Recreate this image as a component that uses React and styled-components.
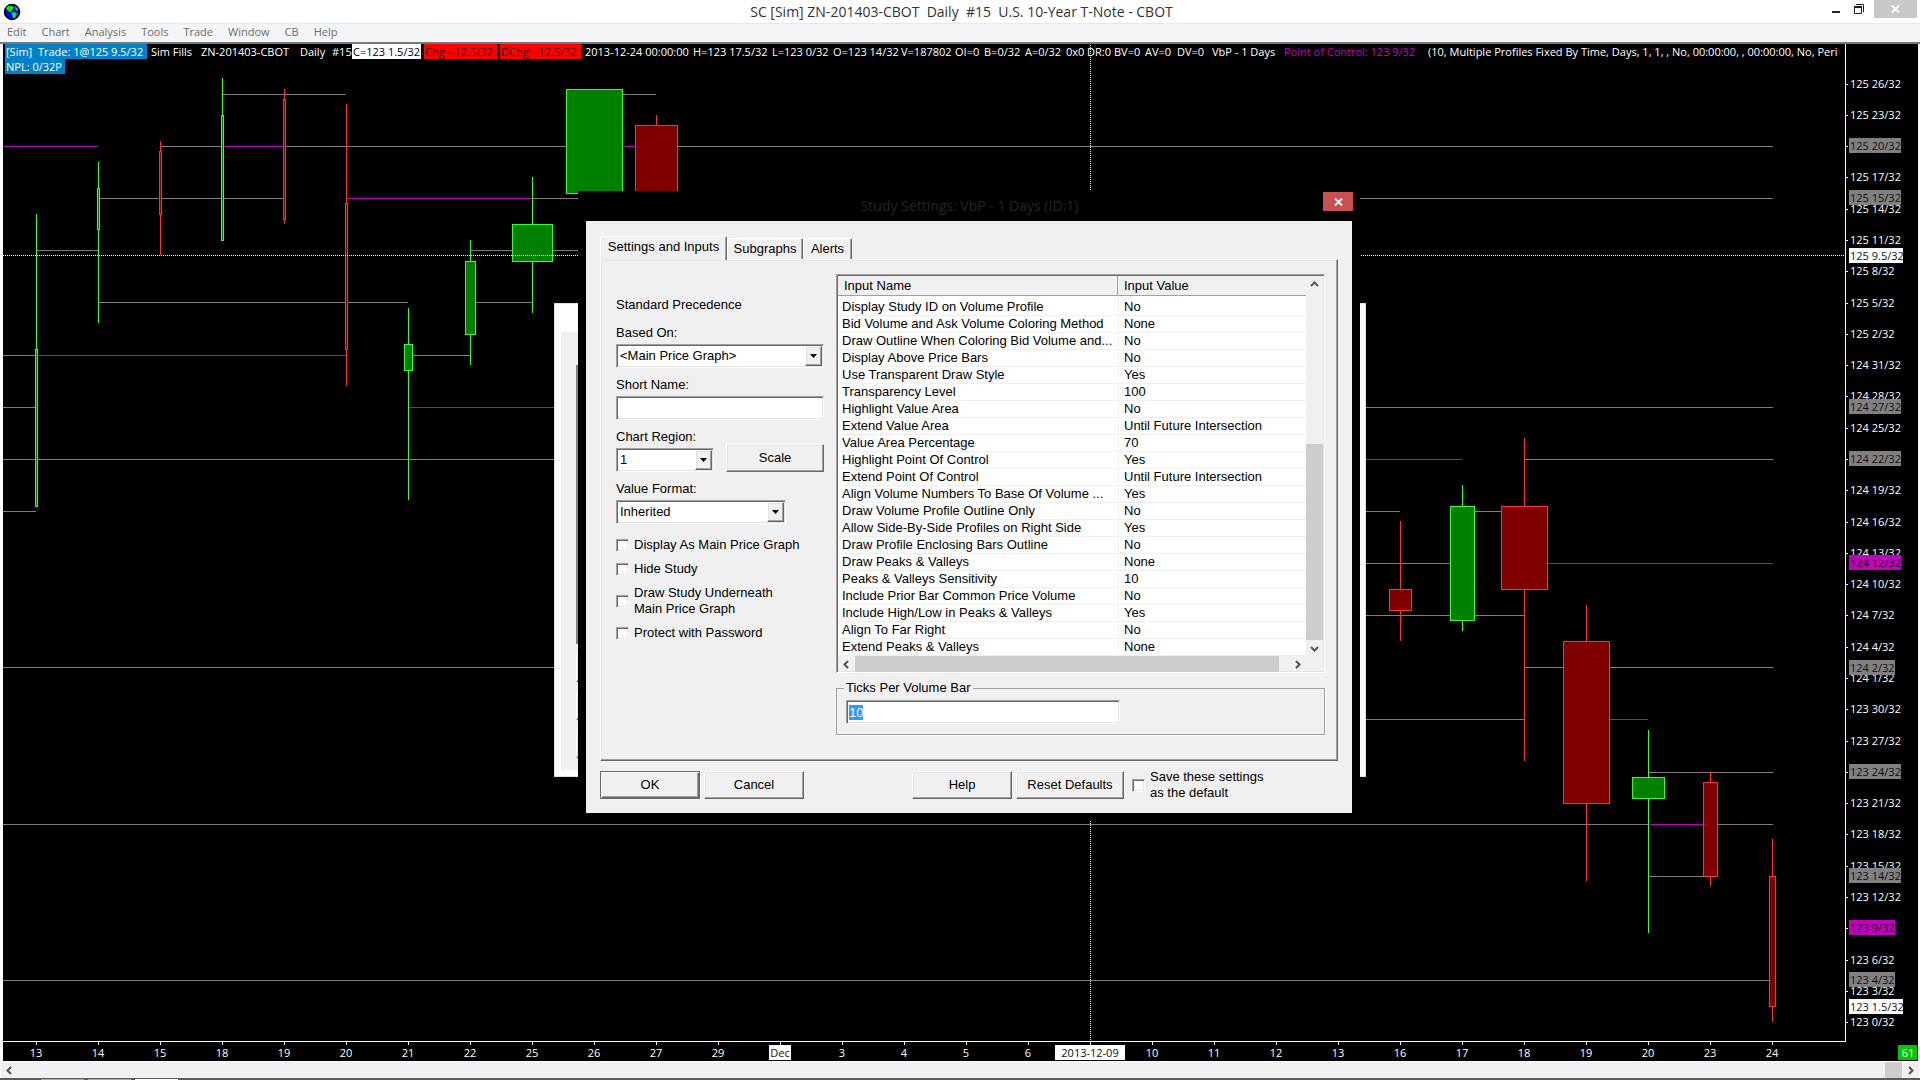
import React, { useEffect, useRef } from 'react'
import styled, { createGlobalStyle, css } from 'styled-components'

const GREEN = '#33ff33'
const RED = '#ff3333'
const GRAY = '#808080'
const MAGENTA = '#c000c0'

const CHART_FONT = "'Open Sans', 'Noto Sans', sans-serif"
const DIALOG_FONT = "'Liberation Sans', Arial, sans-serif"

// Chart geometry
const ORIGIN_X = 3
const ORIGIN_Y = 44
const AXIS_X = 1842
const AXIS_Y = 997
const BAR_SPACING = 62
const FIRST_BAR = 33

const DATES = [
  '13', '14', '15', '18', '19', '20', '21', '22', '25', '26', '27', '29',
  'Dec', '3', '4', '5', '6', '2013-12-09', '10', '11', '12', '13', '16', '17',
  '18', '19', '20', '23', '24',
]

const barX = index => FIRST_BAR + index * BAR_SPACING

// [bar index, high, body top, body bottom, low, body width, up]
const CANDLES = [
  [0, 214, 349, 507, 507, 3, true],
  [1, 162, 188, 230, 323, 3, true],
  [2, 141, 151, 215, 255, 3, false],
  [3, 78, 115, 241, 241, 3, true],
  [4, 89, 99, 220, 224, 3, false],
  [5, 104, 203, 350, 386, 3, false],
  [6, 308, 344, 371, 500, 9, true],
  [7, 240, 261, 335, 365, 11, true],
  [8, 177, 224, 262, 313, 41, true],
  [9, 89, 89, 194, 194, 57, true],
  [10, 115, 125, 220, 220, 43, false],
  [22, 521, 589, 611, 641, 23, false],
  [23, 485, 506, 621, 631, 25, true],
  [24, 438, 506, 590, 761, 47, false],
  [25, 605, 641, 804, 881, 47, false],
  [26, 730, 777, 799, 933, 33, true],
  [27, 772, 782, 877, 886, 15, false],
  [28, 839, 876, 1007, 1022, 7, false],
]

// [y, from, to, point of control]
const LEVELS = [
  [94, 222, 346],
  [94, 623, 656],
  [146, 3, 98, true],
  [146, 160, 222],
  [146, 222, 284, true],
  [146, 284, 594],
  [146, 594, 656, true],
  [146, 656, 1773],
  [198, 98, 284],
  [198, 346, 532, true],
  [198, 532, 1773],
  [250, 36, 98],
  [250, 470, 594],
  [302, 98, 408],
  [302, 470, 532],
  [355, 3, 36],
  [355, 36, 346, true],
  [355, 408, 470],
  [407, 3, 36],
  [407, 408, 594, true],
  [407, 1152, 1773],
  [459, 3, 594],
  [459, 1152, 1462, true],
  [459, 1524, 1773],
  [511, 3, 36],
  [511, 1152, 1400],
  [511, 1462, 1524],
  [563, 1152, 1462],
  [563, 1524, 1773, true],
  [615, 1152, 1524],
  [667, 3, 594],
  [667, 1524, 1773],
  [719, 1152, 1524],
  [719, 1586, 1648, true],
  [772, 1648, 1773],
  [824, 3, 1648],
  [824, 1648, 1710, true],
  [824, 1710, 1773],
  [876, 1648, 1710],
  [980, 3, 1773],
]

// Prices are kept in 32nds
const TOP_PRICE = 125 * 32 + 26
const PRICES = Array.from({ length: 31 }, (_, i) => TOP_PRICE - i * 3)

const priceY = price => Math.floor(40 + (TOP_PRICE - price) * 10.43)
const formatPrice = price => `${Math.floor(price / 32)} ${price % 32}/32`

const TAGS = [
  [125 * 32 + 20, 'level'],
  [125 * 32 + 15, 'level'],
  [125 * 32 + 9.5, 'last'],
  [124 * 32 + 27, 'level'],
  [124 * 32 + 22, 'level'],
  [124 * 32 + 12, 'control'],
  [124 * 32 + 2, 'level'],
  [123 * 32 + 24, 'level'],
  [123 * 32 + 14, 'level'],
  [123 * 32 + 9, 'control'],
  [123 * 32 + 4, 'level'],
  [123 * 32 + 1.5, 'last'],
]

const TAG_FILL = { level: GRAY, control: MAGENTA, last: '#fff' }

// A tag at the same price replaces the plain label
const isTagged = price => TAGS.some(([tagPrice]) => tagPrice === price)

const MENU = ['Edit', 'Chart', 'Analysis', 'Tools', 'Trade', 'Window', 'CB', 'Help']

// [text, cell width, tone]
const STATUS = [
  ['[Sim]  Trade: 1@125 9.5/32', 142, 'trade'],
  ['Sim Fills', 47],
  ['ZN-201403-CBOT', 96],
  ['Daily', 29],
  ['#15', 18],
  ['C=123 1.5/32', 69, 'last'],
  ['Chg=-12.5/32', 73, 'down'],
  ['DChg=-12.5/32', 81, 'down'],
  ['2013-12-24 00:00:00', 105],
  ['H=123 17.5/32', 76],
  ['L=123 0/32', 58],
  ['O=123 14/32', 65],
  ['V=187802', 51],
  ['OI=0', 26],
  ['B=0/32', 38],
  ['A=0/32', 38],
  ['0x0', 18],
  ['DR:0', 24],
  ['BV=0', 28],
  ['AV=0', 29],
  ['DV=0', 32],
  ['VbP - 1 Days', 69],
  ['Point of Control: 123 9/32', 141, 'control'],
  ['(10, Multiple Profiles Fixed By Time, Days, 1, 1, , No, 00:00:00, , 00:00:00, No, Peri', 420],
]

const INPUTS = [
  ['Display Study ID on Volume Profile', 'No'],
  ['Bid Volume and Ask Volume Coloring Method', 'None'],
  ['Draw Outline When Coloring Bid Volume and...', 'No'],
  ['Display Above Price Bars', 'No'],
  ['Use Transparent Draw Style', 'Yes'],
  ['Transparency Level', '100'],
  ['Highlight Value Area', 'No'],
  ['Extend Value Area', 'Until Future Intersection'],
  ['Value Area Percentage', '70'],
  ['Highlight Point Of Control', 'Yes'],
  ['Extend Point Of Control', 'Until Future Intersection'],
  ['Align Volume Numbers To Base Of Volume ...', 'Yes'],
  ['Draw Volume Profile Outline Only', 'No'],
  ['Allow Side-By-Side Profiles on Right Side', 'Yes'],
  ['Draw Profile Enclosing Bars Outline', 'No'],
  ['Draw Peaks & Valleys', 'None'],
  ['Peaks & Valleys Sensitivity', '10'],
  ['Include Prior Bar Common Price Volume', 'No'],
  ['Include High/Low in Peaks & Valleys', 'Yes'],
  ['Align To Far Right', 'No'],
  ['Extend Peaks & Valleys', 'None'],
]

const App = () => (
  <Main>
    <GlobalStyle />
    <TitleBar>
      <Globe />
      <WindowTitle>
        {'SC [Sim] ZN-201403-CBOT  Daily  #15  U.S. 10-Year T-Note - CBOT'}
      </WindowTitle>
      <WindowControls />
    </TitleBar>
    <MenuBar>
      {MENU.map(item => (
        <MenuItem key={item} type="button">
          {item}
        </MenuItem>
      ))}
    </MenuBar>
    <ChartArea>
      <Chart />
      <StatusLine>
        {STATUS.map(([text, width, tone]) => (
          <StatusCell key={text} $width={width} $tone={tone}>
            {text}
          </StatusCell>
        ))}
      </StatusLine>
      <ProfitLine>
        <StatusCell $width={60} $tone="trade">
          NPL: 0/32P
        </StatusCell>
      </ProfitLine>
    </ChartArea>
    <BottomBar>
      <ScrollArrow direction="left" label="Scroll left" />
      <BottomThumb />
      <ScrollArrow direction="right" label="Scroll right" />
    </BottomBar>
    <TaskStrip>
      <Task $color="#aaa5a8" />
      <Task $color="#aaa5a8" />
      <Task $color="#fff" />
    </TaskStrip>
    <BackWindow />
    <StudySettings />
  </Main>
)

const Globe = () => (
  <svg width="18" height="18" viewBox="0 0 18 18" aria-hidden="true">
    <circle cx="9" cy="9" r="7.5" fill="#0000f0" stroke="#000" strokeWidth="1.5" />
    <path
      d="M5 3H9L11 4L10 6L8 7L9 9L7 9L4 7L3 5ZM12 3L15 6V8L13 7L12 5ZM8 10L12 9L14 11L12 15H10L9 12Z"
      fill="#00f000"
    />
  </svg>
)

const WindowControls = () => (
  <Controls>
    <ControlButton type="button" aria-label="Minimize">
      <svg width="11" height="11" viewBox="0 0 11 11">
        <path d="M0 7H8V9H0Z" fill="#222" />
      </svg>
    </ControlButton>
    <ControlButton type="button" aria-label="Restore">
      <svg width="11" height="11" viewBox="0 0 11 11">
        <path d="M3 .5H10.5V8" fill="none" stroke="#222" />
        <path d="M1.5 3.5H8.5V9.5H1.5Z" fill="none" stroke="#222" />
        <path d="M1 2H9V4H1Z" fill="#222" />
      </svg>
    </ControlButton>
    <CloseMain type="button" aria-label="Close">
      <CrossIcon />
    </CloseMain>
  </Controls>
)

const CrossIcon = () => (
  <svg width="9" height="8" viewBox="0 0 9 8">
    <path d="M1 .5L8 7.5M8 .5L1 7.5" stroke="#fff" strokeWidth="1.8" />
  </svg>
)

const Chart = () => (
  <ChartSvg role="img" aria-label="ZN-201403-CBOT daily chart">
    {LEVELS.map(([y, from, to, control]) => (
      <rect
        key={`${y}-${from}`}
        x={from - ORIGIN_X}
        y={y - ORIGIN_Y}
        width={to - from}
        height="1"
        fill={control ? MAGENTA : GRAY}
      />
    ))}
    {CANDLES.map(candle => (
      <Candle key={candle[0]} candle={candle} />
    ))}
    <path
      d={`M0 211.5H${AXIS_X}M1087.5 1V${AXIS_Y}`}
      stroke="#fff"
      strokeDasharray="1 1"
    />
    <PriceAxis />
    <DateAxis />
  </ChartSvg>
)

const Candle = ({ candle: [index, high, top, bottom, low, width, up] }) => {
  const x = barX(index)
  const color = up ? GREEN : RED
  return (
    <g>
      <rect x={x} y={high - ORIGIN_Y} width="1" height={low - high} fill={color} />
      <rect
        x={x + 1 - width / 2}
        y={top - ORIGIN_Y + 0.5}
        width={width - 1}
        height={bottom - top - 1}
        fill={up ? '#008000' : '#800000'}
        stroke={color}
      />
    </g>
  )
}

const PriceAxis = () => (
  <g>
    <rect x={AXIS_X} y="0" width="1" height={AXIS_Y + 1} fill="#fff" />
    {PRICES.map(price => (
      <g key={price}>
        <rect x={AXIS_X} y={priceY(price)} width="3" height="1" fill="#fff" />
        {!isTagged(price) && (
          <AxisText x={AXIS_X + 5} y={priceY(price) + 4}>
            {formatPrice(price)}
          </AxisText>
        )}
      </g>
    ))}
    {TAGS.map(([price, kind]) => {
      const text = formatPrice(price)
      return (
        <g key={price}>
          <rect
            x={AXIS_X + 4}
            y={priceY(price) - 8}
            width={text.length * 6 - 2 - (text.length > 9 ? 4 : 0)}
            height="15"
            fill={TAG_FILL[kind]}
          />
          <AxisText x={AXIS_X + 5} y={priceY(price) + 4} $dark>
            {text}
          </AxisText>
        </g>
      )
    })}
  </g>
)

const DateAxis = () => (
  <g>
    <rect x="0" y={AXIS_Y} width={AXIS_X + 1} height="1" fill="#fff" />
    {DATES.map((date, i) => {
      const tagged = date.length > 2
      const tagWidth = date.length > 3 ? 70 : 22
      return (
        <g key={i}>
          <rect x={barX(i)} y={AXIS_Y + 1} width="1" height="3" fill="#fff" />
          {tagged && (
            <rect
              x={barX(i) - tagWidth / 2}
              y={AXIS_Y + 4}
              width={tagWidth}
              height="15"
              fill="#fff"
            />
          )}
          <AxisText x={barX(i)} y={AXIS_Y + 16} textAnchor="middle" $dark={tagged}>
            {date}
          </AxisText>
        </g>
      )
    })}
    <rect x="1895" y={AXIS_Y + 4} width="19" height="15" fill="#00c800" />
    <AxisText x="1905" y={AXIS_Y + 16} textAnchor="middle">
      61
    </AxisText>
  </g>
)

const ARROWS = {
  up: 'M1 6L4.5 2.5L8 6',
  down: 'M1 3L4.5 6.5L8 3',
  left: 'M6 1L2.5 4.5L6 8',
  right: 'M3 1L6.5 4.5L3 8',
}

const ScrollArrow = ({ direction, label }) => (
  <ArrowButton type="button" aria-label={label}>
    <svg width="9" height="9" viewBox="0 0 9 9">
      <path d={ARROWS[direction]} fill="none" stroke="#555" strokeWidth="2" />
    </svg>
  </ArrowButton>
)

const BackWindow = () => (
  <BackFrame aria-hidden="true">
    <BackPanel>
      <BackList />
      <BackButton />
      <BackButton />
      <BackButton />
    </BackPanel>
  </BackFrame>
)

const Dropdown = ({ id, label, value, width }) => (
  <Field>
    <label htmlFor={id}>{label}</label>
    <SelectBox $width={width}>
      <Select id={id} defaultValue={value}>
        <option>{value}</option>
      </Select>
      <SelectArrow>
        <svg width="7" height="4" viewBox="0 0 7 4">
          <path d="M0 0H7L3.5 4Z" fill="#000" />
        </svg>
      </SelectArrow>
    </SelectBox>
  </Field>
)

const StudySettings = () => {
  const ticks = useRef(null)

  useEffect(() => {
    ticks.current.focus({ preventScroll: true })
    ticks.current.select()
  }, [])

  return (
    <Dialog role="dialog" aria-labelledby="study-title">
      <DialogBar>
        <DialogTitle id="study-title">Study Settings: VbP - 1 Days (ID:1)</DialogTitle>
        <DialogClose type="button" aria-label="Close dialog">
          <CrossIcon />
        </DialogClose>
      </DialogBar>
      <DialogBody>
        <Tabs role="tablist">
          <Tab type="button" role="tab" aria-selected="true" $width={127} $active>
            Settings and Inputs
          </Tab>
          <Tab type="button" role="tab" aria-selected="false" $width={76}>
            Subgraphs
          </Tab>
          <Tab type="button" role="tab" aria-selected="false" $width={49}>
            Alerts
          </Tab>
        </Tabs>
        <TabPanel role="tabpanel">
          <Settings>
            <Precedence>Standard Precedence</Precedence>
            <Dropdown id="based-on" label="Based On:" value="<Main Price Graph>" width={208} />
            <Field>
              <label htmlFor="short-name">Short Name:</label>
              <TextInput id="short-name" type="text" $width={208} />
            </Field>
            <RegionRow>
              <Dropdown id="region" label="Chart Region:" value="1" width={98} />
              <PushButton type="button" $width={98}>
                Scale
              </PushButton>
            </RegionRow>
            <Dropdown id="format" label="Value Format:" value="Inherited" width={170} />
            <Checks>
              <Check>
                <CheckBox type="checkbox" />
                Display As Main Price Graph
              </Check>
              <Check>
                <CheckBox type="checkbox" />
                Hide Study
              </Check>
              <Check>
                <CheckBox type="checkbox" />
                <span>
                  Draw Study Underneath
                  <br />
                  Main Price Graph
                </span>
              </Check>
              <Check>
                <CheckBox type="checkbox" />
                Protect with Password
              </Check>
            </Checks>
          </Settings>
          <Inputs>
            <ListBox>
              <InputTable>
                <colgroup>
                  <NameCol />
                  <col />
                </colgroup>
                <thead>
                  <tr>
                    <th>Input Name</th>
                    <th>Input Value</th>
                  </tr>
                </thead>
                <tbody>
                  {INPUTS.map(([name, value]) => (
                    <tr key={name}>
                      <td>{name}</td>
                      <td>{value}</td>
                    </tr>
                  ))}
                </tbody>
              </InputTable>
              <VerticalBar>
                <ScrollArrow direction="up" label="Scroll list up" />
                <VerticalThumb />
                <ScrollArrow direction="down" label="Scroll list down" />
              </VerticalBar>
              <HorizontalBar>
                <ScrollArrow direction="left" label="Scroll list left" />
                <HorizontalThumb />
                <ScrollArrow direction="right" label="Scroll list right" />
              </HorizontalBar>
            </ListBox>
            <Group>
              <legend>Ticks Per Volume Bar</legend>
              <TextInput
                ref={ticks}
                type="text"
                aria-label="Ticks Per Volume Bar"
                defaultValue="10"
                $width={274}
              />
            </Group>
          </Inputs>
        </TabPanel>
        <Footer>
          <PushButton type="button" $width={100} $default>
            OK
          </PushButton>
          <PushButton type="button" $width={100}>
            Cancel
          </PushButton>
          <Spacer />
          <PushButton type="button" $width={100}>
            Help
          </PushButton>
          <PushButton type="button" $width={108}>
            Reset Defaults
          </PushButton>
          <SaveCheck>
            <CheckBox type="checkbox" />
            <span>
              Save these settings
              <br />
              as the default
            </span>
          </SaveCheck>
        </Footer>
      </DialogBody>
    </Dialog>
  )
}

const GlobalStyle = createGlobalStyle`
  *, *::before, *::after {
    box-sizing: border-box;
  }
  body {
    margin: 0;
    background: #fff;
    overflow: hidden;
  }
  button, input, select {
    font: inherit;
    color: inherit;
    margin: 0;
    padding: 0;
    border-radius: 0;
    outline: none;
  }
`

const sunken = css`
  border: 1px solid;
  border-color: #a0a0a0 #fff #fff #a0a0a0;
  box-shadow: inset 1px 1px #696969, inset -1px -1px #e3e3e3;
`

const raised = css`
  border: 1px solid;
  border-color: #fff #696969 #696969 #fff;
  box-shadow: inset -1px -1px #a0a0a0, inset 1px 1px #e3e3e3;
`

const Main = styled.div`
  position: relative;
  display: flex;
  flex-direction: column;
  height: 100vh;
  font-family: ${CHART_FONT};
  font-size: 11px;
`

const TitleBar = styled.header`
  display: grid;
  grid-template-columns: 120px 1fr 120px;
  height: 23px;
  padding-left: 3px;
  padding-top: 3px;
`

const WindowTitle = styled.h1`
  margin: 0;
  font-size: 14px;
  font-weight: 400;
  line-height: 18px;
  text-align: center;
  white-space: pre;
  color: #333;
`

const Controls = styled.div`
  display: flex;
  justify-content: flex-end;
  align-items: flex-start;
  gap: 10px;
  height: 18px;
  margin-top: -3px;
  padding-right: 3px;
`

const ControlButton = styled.button`
  display: flex;
  border: 0;
  background: none;
  padding-top: 4px;
`

const CloseMain = styled.button`
  display: flex;
  align-items: center;
  justify-content: center;
  width: 43px;
  height: 18px;
  border: 0;
  background: #c8c8c8;
`

const MenuBar = styled.nav`
  display: flex;
  align-items: flex-start;
  gap: 15px;
  height: 21px;
  padding-left: 7px;
  background: #f4f5f7;
  border-top: 1px solid #e8e8e8;
  border-bottom: 2px solid #767a7c;
`

const MenuItem = styled.button`
  border: 0;
  background: none;
  color: #6d6d6d;
  line-height: 16px;
`

const ChartArea = styled.main`
  position: relative;
  flex: 1;
  min-height: 0;
  margin: 0 2px 0 3px;
  background: #000;
  overflow: hidden;
`

const ChartSvg = styled.svg`
  display: block;
  width: 100%;
  height: 100%;
  shape-rendering: crispEdges;
`

const AxisText = styled.text`
  font-family: ${CHART_FONT};
  font-size: 11px;
  fill: ${({ $dark }) => ($dark ? '#111' : '#fff')};
`

const StatusLine = styled.div`
  position: absolute;
  top: 0;
  left: 2px;
  right: 73px;
  display: flex;
  gap: 3px;
  overflow: hidden;
`

const ProfitLine = styled.div`
  position: absolute;
  top: 15px;
  left: 2px;
`

const TONES = {
  trade: 'background: #0080c8; color: #fff;',
  last: 'background: #fff; color: #000;',
  down: 'background: #f00; color: #400000;',
  control: `color: ${MAGENTA};`,
}

const StatusCell = styled.div`
  flex: none;
  width: ${({ $width }) => $width}px;
  height: 15px;
  padding-left: 1px;
  line-height: 15px;
  white-space: pre;
  color: #fff;
  ${({ $tone }) => TONES[$tone]}
`

const BottomBar = styled.div`
  display: flex;
  align-items: stretch;
  justify-content: space-between;
  height: 17px;
  margin: 0 1px;
  border-top: 1px solid #fff;
  background: #f0f0f0;
`

const BottomThumb = styled.div`
  width: 17px;
  margin-left: auto;
  background: #cdcdcd;
`

const ArrowButton = styled.button`
  display: flex;
  flex: none;
  align-items: center;
  justify-content: center;
  width: 17px;
  height: 16px;
  border: 0;
  background: none;
`

const TaskStrip = styled.div`
  display: flex;
  align-items: flex-end;
  gap: 4px;
  height: 2px;
  padding-left: 41px;
  background: #5f5a5d;
`

const Task = styled.div`
  width: 43px;
  height: 1px;
  background: ${({ $color }) => $color};
`

const BackFrame = styled.div`
  position: absolute;
  left: 554px;
  top: 303px;
  width: 812px;
  height: 474px;
  padding: 28px 6px 6px;
  background: #fff;
  border: 1px solid #e0e0e0;
`

const BackPanel = styled.div`
  height: 100%;
  padding: 33px 15px 0;
  background: #f0f0f0;
`

const BackList = styled.div`
  height: 279px;
  border-left: 2px solid #808080;
`

const BackButton = styled.div`
  ${raised}
  height: 28px;
  margin-top: 10px;
`

const Dialog = styled.section`
  position: absolute;
  left: 578px;
  top: 191px;
  width: 782px;
  padding: 0 8px 8px;
  background: #000;
  font-family: ${DIALOG_FONT};
  font-size: 13px;
  line-height: 16px;
  color: #000;
`

const DialogBar = styled.div`
  display: grid;
  grid-template-columns: 30px 1fr 30px;
  align-items: start;
  height: 30px;
  margin-right: -1px;
  padding-top: 1px;
`

const DialogTitle = styled.h2`
  grid-column: 2;
  margin: 0;
  font-family: ${CHART_FONT};
  font-size: 14px;
  font-weight: 400;
  line-height: 28px;
  text-align: center;
  color: #262626;
`

const DialogClose = styled.button`
  display: flex;
  align-items: center;
  justify-content: center;
  height: 19px;
  border: 0;
  background: #c75050;
`

const DialogBody = styled.div`
  padding: 14px 14px 12px;
  background: #f0f0f0;
`

const Tabs = styled.div`
  display: flex;
  align-items: flex-end;
  height: 24px;
`

const Tab = styled.button`
  width: ${({ $width }) => $width}px;
  height: ${({ $active }) => ($active ? 24 : 21)}px;
  margin-bottom: ${({ $active }) => ($active ? -1 : 0)}px;
  padding-bottom: ${({ $active }) => ($active ? 4 : 0)}px;
  position: relative;
  border: 1px solid;
  border-color: #fff #696969 transparent #fff;
  border-bottom: 0;
  border-radius: 2px 2px 0 0;
  box-shadow: inset -1px 0 #a0a0a0;
  background: #f0f0f0;
`

const TabPanel = styled.div`
  ${raised}
  display: flex;
  justify-content: space-between;
  height: 502px;
  padding: 14px 12px 0 15px;
`

const Settings = styled.div`
  display: flex;
  flex-direction: column;
  width: 208px;
`

const Precedence = styled.div`
  margin: 23px 0 12px;
`

const Field = styled.div`
  display: flex;
  flex-direction: column;
  gap: 3px;
  height: 52px;
`

const RegionRow = styled.div`
  display: flex;
  justify-content: space-between;
  align-items: flex-start;

  button {
    margin-top: 15px;
  }
`

const SelectBox = styled.div`
  ${sunken}
  display: grid;
  width: ${({ $width }) => $width}px;
  height: 24px;
  padding: 1px;
  background: #fff;
`

const Select = styled.select`
  grid-area: 1 / 1;
  width: 100%;
  appearance: none;
  border: 0;
  padding-left: 2px;
  background: none;
`

const SelectArrow = styled.span`
  ${raised}
  grid-area: 1 / 1;
  justify-self: end;
  display: flex;
  align-items: center;
  justify-content: center;
  width: 17px;
  background: #f0f0f0;
  pointer-events: none;
`

const TextInput = styled.input`
  ${sunken}
  width: ${({ $width }) => $width}px;
  height: 24px;
  padding: 0 2px;
  background: #fff;

  &::selection {
    background: #3399ff;
    color: #fff;
  }
`

const PushButton = styled.button`
  ${raised}
  flex: none;
  width: ${({ $width }) => $width}px;
  height: 28px;
  background: #f0f0f0;
  ${({ $default }) =>
    $default &&
    css`
      border-color: #696969;
      box-shadow: inset 1px 1px #fff, inset -1px -1px #696969,
        inset -2px -2px #a0a0a0;
    `}
`

const Checks = styled.div`
  display: flex;
  flex-direction: column;
  gap: 8px;
  margin-top: 4px;
`

const Check = styled.label`
  display: flex;
  align-items: center;
  gap: 5px;
`

const CheckBox = styled.input`
  ${sunken}
  flex: none;
  width: 13px;
  height: 13px;
  appearance: none;
  background: #fff;
`

const Inputs = styled.div`
  display: flex;
  flex-direction: column;
  gap: 7px;
  width: 489px;
`

const ListBox = styled.div`
  ${sunken}
  display: grid;
  grid-template-columns: 1fr 17px;
  grid-template-rows: 1fr 16px;
  height: 399px;
  padding: 1px;
  background: #f0f0f0;
`

const InputTable = styled.table`
  table-layout: fixed;
  width: 100%;
  border-collapse: separate;
  border-spacing: 0;
  background: #fff;

  th {
    height: 20px;
    padding: 0 6px;
    font-weight: 400;
    text-align: left;
    background: #f0f0f0;
    border-right: 1px solid #a0a0a0;
    border-bottom: 1px solid #a0a0a0;
  }

  th:last-child {
    border-right: 0;
  }

  td {
    height: 17px;
    padding: 0 0 0 4px;
    line-height: 16px;
    white-space: nowrap;
    border-bottom: 1px solid #f0f0f0;
  }

  td + td {
    padding-left: 5px;
    border-left: 1px solid #f0f0f0;
  }

  tbody tr:first-child td {
    height: 20px;
    padding-top: 3px;
  }
`

const NameCol = styled.col`
  width: 280px;
`

const VerticalBar = styled.div`
  display: flex;
  flex-direction: column;
  justify-content: space-between;
`

const VerticalThumb = styled.div`
  height: 196px;
  margin-top: auto;
  background: #cdcdcd;
`

const HorizontalBar = styled.div`
  display: flex;
`

const HorizontalThumb = styled.div`
  flex: 1;
  margin-right: 10px;
  background: #cdcdcd;
`

const Group = styled.fieldset`
  height: 55px;
  margin: 0;
  padding: 4px 9px 0;
  border: 1px solid #a0a0a0;
  box-shadow: 1px 1px #fff;

  legend {
    margin-left: -2px;
    padding: 0 2px;
  }
`

const Footer = styled.div`
  display: flex;
  align-items: center;
  gap: 4px;
  padding-top: 8px;
`

const Spacer = styled.div`
  flex: 1;
`

const SaveCheck = styled(Check)`
  width: 210px;
  padding-left: 4px;
`

export default App
